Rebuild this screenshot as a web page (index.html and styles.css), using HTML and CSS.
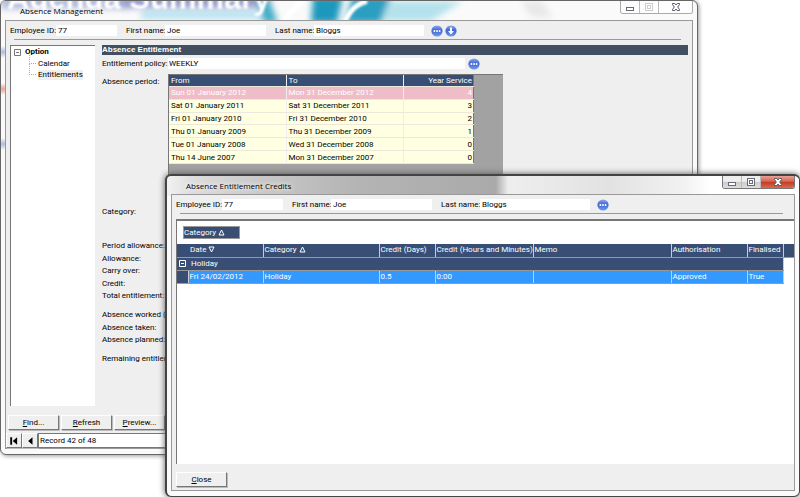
FILE: index.html
```html
<!DOCTYPE html>
<html lang="en">
<head>
<meta charset="utf-8">
<title>Absence Management</title>
<link rel="stylesheet" href="styles.css">
</head>
<body>
<svg class="defs" width="0" height="0" aria-hidden="true">
  <defs>
    <linearGradient id="ball" x1="0" y1="0" x2="0" y2="1">
      <stop offset="0" stop-color="#8fa9ee"/><stop offset=".45" stop-color="#3f66d2"/><stop offset="1" stop-color="#6f9cf0"/>
    </linearGradient>
    <symbol id="more" viewBox="0 0 12 12">
      <circle cx="6" cy="6" r="5.6" fill="url(#ball)"/>
      <circle cx="3.4" cy="6" r="1" fill="#fff"/><circle cx="6" cy="6" r="1" fill="#fff"/><circle cx="8.6" cy="6" r="1" fill="#fff"/>
    </symbol>
    <symbol id="down" viewBox="0 0 12 12">
      <circle cx="6" cy="6" r="5.6" fill="url(#ball)"/>
      <path d="M5 2.5h2v3.500h2L6 9.500 3 6h2z" fill="#fff"/>
    </symbol>
    <symbol id="min" viewBox="0 0 10 10"><rect x="1.500" y="5.500" width="7" height="3" fill="#fff" stroke="#666b78"/></symbol>
    <symbol id="max" viewBox="0 0 10 10"><rect x="1.500" y="1.500" width="7" height="7" fill="#fff" stroke="currentColor"/><rect x="3.500" y="3.500" width="3" height="3" fill="none" stroke="currentColor"/></symbol>
    <symbol id="cross" viewBox="0 0 10 10"><path d="M1.500 1.500h2.300L5 3l1.200-1.500h2.300v1L6.700 5l1.800 2.500v1H6.200L5 7 3.800 8.500H1.500v-1L3.300 5 1.500 2.500z" fill="#fff" stroke="#555a68"/></symbol>
  </defs>
</svg>

<section class="window main-window" aria-label="Absence Management">
  <svg class="backdrop" width="690" height="20" aria-hidden="true">
    <defs>
      <filter id="soft" x="-20%" y="-50%" width="140%" height="200%"><feGaussianBlur stdDeviation="3"/></filter>
      <filter id="glow"><feGaussianBlur stdDeviation="1"/></filter>
    </defs>
    <g filter="url(#soft)">
      <rect x="0" y="-6" width="130" height="14" fill="#b4bddb"/>
      <rect x="120" y="-6" width="150" height="13" fill="#9a9fd0"/>
      <rect x="140" y="10" width="130" height="8" fill="#b4e2ef"/>
      <path d="M255 0h14l8 22h-14z" fill="#45afc9"/>
      <path d="M312-5h30l-6 27h-26z" fill="#1f98bc"/>
      <path d="M352-5h38l-10 27h-36z" fill="#2c9fc2"/>
      <path d="M388 0h74l-32 20h-50z" fill="#b4e2ec"/>
      <path d="M520 0h20l12 16h-22z" fill="#e8e8e8"/>
    </g>
    <text class="banner" x="6" y="8" filter="url(#glow)">Agenda Summary</text>
    <path d="M283 20C291 8 296 4 302 0M344 20C350 8 356 3 366 0" fill="none" stroke="#fff" stroke-width="5" filter="url(#glow)"/>
  </svg>
  <header class="titlebar">
    <h1>Absence Management</h1>
    <div class="caption">
      <button aria-label="Minimise"><svg><use href="#min"/></svg></button>
      <button class="off" aria-label="Maximise"><svg><use href="#max"/></svg></button>
      <button class="close" aria-label="Close window"><svg><use href="#cross"/></svg></button>
    </div>
  </header>
  <div class="client">
    <form class="person">
      <label for="id1" class="l-id">Employee ID:</label><input id="id1" class="w-id" value="77">
      <label for="fn1">First name:</label><input id="fn1" class="w-first" value="Joe">
      <label for="ln1">Last name:</label><input id="ln1" class="w-last" value="Bloggs">
      <button type="button" class="ball" aria-label="Find employee"><svg><use href="#more"/></svg></button>
      <button type="button" class="ball" aria-label="Show details"><svg><use href="#down"/></svg></button>
    </form>
    <div class="body">
      <nav class="tree">
        <div class="root"><svg class="box" viewBox="0 0 7 7"><path d="M.5 .5h6v6h-6zM2 3.500h3" fill="none" stroke="#777"/></svg><b>Option</b></div>
        <ul>
          <li><a href="#calendar">Calendar</a></li>
          <li><a class="current" href="#entitlements">Entitlements</a></li>
        </ul>
      </nav>
      <main>
        <h2>Absence Entitlement</h2>
        <div class="line policy">
          <label for="policy">Entitlement policy:</label><input id="policy" value="WEEKLY">
          <button type="button" class="ball" aria-label="Choose policy"><svg><use href="#more"/></svg></button>
        </div>
        <div class="line period">
          <span>Absence period:</span>
          <div class="sheet">
            <table class="periods">
              <colgroup><col class="from"><col class="to"><col></colgroup>
              <thead><tr><th>From</th><th>To</th><th>Year Service</th></tr></thead>
              <tbody>
                <tr class="picked"><td>Sun 01 January 2012</td><td>Mon 31 December 2012</td><td>4</td></tr>
                <tr><td>Sat 01 January 2011</td><td>Sat 31 December 2011</td><td>3</td></tr>
                <tr><td>Fri 01 January 2010</td><td>Fri 31 December 2010</td><td>2</td></tr>
                <tr><td>Thu 01 January 2009</td><td>Thu 31 December 2009</td><td>1</td></tr>
                <tr><td>Tue 01 January 2008</td><td>Wed 31 December 2008</td><td>0</td></tr>
                <tr><td>Thu 14 June 2007</td><td>Mon 31 December 2007</td><td>0</td></tr>
              </tbody>
            </table>
          </div>
        </div>
        <div class="group category"><span>Category:</span></div>
        <div class="group five"><span>Period allowance:</span><span>Allowance:</span><span>Carry over:</span><span>Credit:</span><span>Total entitlement:</span></div>
        <div class="group three"><span>Absence worked (not taken):</span><span>Absence taken:</span><span>Absence planned:</span></div>
        <div class="group"><span>Remaining entitlement:</span></div>
      </main>
    </div>
    <div class="actions">
      <button class="push"><u>F</u>ind...</button><button class="push"><u>R</u>efresh</button><button class="push"><u>P</u>review...</button>
    </div>
    <div class="records">
      <button class="push step" aria-label="First record"><svg viewBox="0 0 8 8"><path d="M1 1h1.500v6H1zM6.500 1v6L3 4z"/></svg></button>
      <button class="push step" aria-label="Previous record"><svg viewBox="0 0 8 8"><path d="M6 1v6L2.500 4z"/></svg></button>
      <input aria-label="Record" value="Record 42 of 48">
    </div>
  </div>
</section>

<section class="window credits-window" aria-label="Absence Entitlement Credits">
  <header class="titlebar">
    <h1>Absence Entitlement Credits</h1>
    <div class="caption">
      <button aria-label="Minimise"><svg><use href="#min"/></svg></button>
      <button aria-label="Maximise"><svg><use href="#max"/></svg></button>
      <button class="close red" aria-label="Close window"><svg><use href="#cross"/></svg></button>
    </div>
  </header>
  <div class="client">
    <form class="person">
      <label for="id2" class="l-id">Employee ID:</label><input id="id2" class="w-id" value="77">
      <label for="fn2">First name:</label><input id="fn2" class="w-first" value="Joe">
      <label for="ln2">Last name:</label><input id="ln2" class="w-last" value="Bloggs">
      <button type="button" class="ball" aria-label="Find employee"><svg><use href="#more"/></svg></button>
    </form>
    <div class="panel">
      <button class="grouping">Category <svg viewBox="0 0 7 7"><path d="M3.500 1l2.500 5H1z"/></svg></button>
      <table class="credits">
        <colgroup><col class="c-gutter"><col class="c-date"><col class="c-cat"><col class="c-days"><col class="c-hours"><col><col class="c-auth"><col class="c-final"><col class="c-tail"></colgroup>
        <thead><tr>
          <th colspan="2" class="date">Date <svg viewBox="0 0 7 7"><path d="M3.500 6L1 1h5z"/></svg></th>
          <th>Category <svg viewBox="0 0 7 7"><path d="M3.500 1l2.500 5H1z"/></svg></th>
          <th>Credit (Days)</th><th>Credit (Hours and Minutes)</th><th>Memo</th><th>Authorisation</th><th>Finalised</th><th class="tail"></th>
        </tr></thead>
        <tbody>
          <tr class="holiday"><td colspan="8"><svg class="box" viewBox="0 0 7 7"><path d="M.5 .5h6v6h-6zM2 3.500h3" fill="none" stroke="#fff"/></svg>Holiday</td><td class="none"></td></tr>
          <tr class="entry"><td class="gutter"></td><td>Fri 24/02/2012</td><td>Holiday</td><td>0.5</td><td>0:00</td><td></td><td>Approved</td><td>True</td><td class="none"></td></tr>
        </tbody>
      </table>
    </div>
    <div class="actions"><button class="push"><u>C</u>lose</button></div>
  </div>
</section>
</body>
</html>
```
FILE: styles.css
```css
* { box-sizing: border-box; }
html, body { height: 100%; }
body {
  margin: 0;
  position: relative;
  overflow: hidden;
  background: #fff;
  color: #000;
  font: 8px/12px "Roboto", sans-serif;
}
button, input { font: inherit; color: inherit; margin: 0; padding: 0; border: 0; border-radius: 0; }
input { background: #fff; height: 11px; padding: 0 2px; min-width: 0; }
h1, h2, ul { margin: 0; padding: 0; font-size: inherit; }
a { color: inherit; text-decoration: none; }
span, label, th, td, button { white-space: nowrap; }
.defs { position: absolute; }

/* Windows */
.window {
  position: absolute;
  display: flex;
  flex-direction: column;
  border: 1px solid #666;
  border-radius: 6px;
  padding: 0 4px 5px;
  background: #fafafa;
}
.main-window {
  left: 0; top: 0; right: 102px; height: 455px;
  box-shadow: 1px 1px 4px #999;
  background:
    radial-gradient(circle at 2px 51px, #a9b8e6, transparent 6px),
    radial-gradient(circle at 2px 88px, #f09a90, transparent 6px),
    radial-gradient(circle at 2px 143px, #a9b8e6, transparent 6px),
    #fafafa;
}
.credits-window {
  left: 165px; top: 174px; right: 0; bottom: 0;
  border-width: 2px 1px 1px 2px;
  border-color: #444;
  box-shadow: 0 0 6px #555;
  background: linear-gradient(90deg, #f2f2f2 0, #ddd 4%, #c8c8c8 15%, #b4b4b4 30%, #aaa 52%, #eee 54%, #e2e2e2 70%, #f2f2f2 82%, #fff 86%) top / 100% 20px no-repeat, #fafafa;
}
.backdrop { position: absolute; left: 0; top: 0; max-width: 100%; }
.banner { font: bold 31px "Liberation Sans", sans-serif; fill: #fff; }
.titlebar { position: relative; display: flex; justify-content: space-between; height: 19px; flex: none; }
.titlebar h1 { font: 8px/19px "Open Sans", "Noto Sans", sans-serif; padding-left: 15px; text-shadow: 0 0 4px #fff, 0 0 6px #fff; }
.credits-window .titlebar { height: 18px; }
.caption { display: flex; height: 13px; border: 1px solid #aaa; border-top: 0; border-radius: 0 0 3px 3px; overflow: hidden; }
.caption button { width: 19px; display: grid; place-items: center; background: #fdfdfd; border-right: 1px solid #bbb; }
.caption button.close { width: 33px; border-right: 0; }
.caption svg { width: 10px; height: 10px; color: #666b78; }
.caption .off svg { color: #ccc; }
.credits-window .caption { border-color: #777; }
.credits-window .caption button { background: linear-gradient(#eee 45%, #ccc 50%, #ddd); }
.credits-window .caption button.red { background: linear-gradient(#e9a296 0, #d5644f 45%, #c43a22 50%, #d86a50); }
.client {
  position: relative;
  flex: 1;
  display: flex;
  flex-direction: column;
  min-height: 0;
  border: 1px solid #999;
  background: #efefef;
}

/* Employee line */
.person {
  display: flex;
  align-items: center;
  height: 19px;
  padding-left: 4px;
  margin-right: 11px;
  flex: none;
  background: linear-gradient(#999, #999) 8px 100% / 100% 1px no-repeat;
}
.person label { width: 39px; flex: none; }
.person .l-id { width: 46px; }
.person .w-id { width: 61px; margin-right: 9px; }
.person .w-first { width: 101px; margin-right: 9px; }
.person .w-last { width: 110px; margin-right: 7px; }
.ball { width: 12px; height: 12px; background: none; margin-right: 2px; flex: none; }
.ball svg { display: block; width: 12px; height: 12px; }

/* Main window */
.body { flex: 1; display: flex; gap: 7px; min-height: 0; padding: 5px 4px 0; }
.tree { width: 85px; flex: none; background: #fff; border: 1px solid #777; border-right: 0; border-bottom: 0; }
.root { display: flex; align-items: center; gap: 4px; padding: 0 3px; }
.box { width: 7px; height: 7px; }
.tree ul { list-style: none; line-height: 10px; margin-left: 18px; }
.tree li { display: flex; align-items: center; }
.tree li::before { content: ""; width: 6px; height: 10px; margin: -5px 2px 5px 0; border: dotted #aaa; border-width: 0 0 1px 1px; }
.tree .current { background: #eee; }
main { flex: 1; min-width: 0; }
h2 { height: 10px; background: #414f60; color: #fff; font: bold 8px/10px "Liberation Sans", sans-serif; }
.line { display: flex; }
.line > label, .line > span { width: 66px; flex: none; }
.policy { padding-top: 3px; }
.policy input { width: 297px; margin-right: 3px; padding: 0 1px; }
.period { padding-top: 4px; }
.period > span { padding-top: 2px; }
.sheet { width: 335px; height: 130px; background: #a2a2a2; border: 1px solid #777; border-right: 0; }
.periods { width: 305px; height: 89px; table-layout: fixed; border-collapse: collapse; border-right: 1px solid #777; background: #ffffe1; }
.from { width: 117px; }
.to { width: 117px; }
.periods th, .periods td { padding: 0 2px; line-height: 11px; text-align: left; font-weight: normal; border-left: 1px solid #eee; border-bottom: 1px solid #eee8dc; }
.periods th { background: #384e75; color: #fff; }
.periods th:first-child, .periods td:first-child { border-left: 0; }
.periods th:last-child, .periods td:last-child { text-align: right; padding-right: 1px; }
.periods .picked { background: #efbdc8; color: #fff; }
.group { display: grid; margin-bottom: 6px; }
.category { margin: 2px 0 22px; }
.five { height: 63px; }
.three { height: 38px; }

/* Push buttons and record bar */
.actions { display: flex; gap: 2px; padding: 9px 2px 3px; }
.push { width: 51px; height: 15px; line-height: 13px; background: #efefef; border: 1px solid; border-color: #fff #777 #777 #fff; box-shadow: 1px 1px 0 #bbb; }
.records { display: flex; }
.records .step { width: 16px; display: grid; place-items: center; }
.step svg { width: 10px; height: 10px; }
.records input { flex: 1; height: 15px; padding: 0 1px; border: 1px solid #777; }

/* Credits window */
.panel { flex: 1; margin: 5px 0 0 4px; border: 1px solid #777; border-width: 2px 0 0 1px; background: #fff; min-height: 0; }
.grouping { display: block; width: 57px; height: 13px; line-height: 11px; margin: 5px 0 5px 6px; background: #384e75; color: #fff; text-align: left; border: 1px solid #999; }
.grouping svg, .credits th svg { width: 7px; height: 7px; fill: none; stroke: #fff; vertical-align: -1px; }
.credits { width: 100%; table-layout: fixed; border-collapse: collapse; color: #fff; }
.c-gutter { width: 11px; }
.c-date { width: 75px; }
.c-cat { width: 116px; }
.c-days { width: 56px; }
.c-hours { width: 98px; }
.c-auth { width: 76px; }
.c-final { width: 36px; }
.c-tail { width: 11px; }
.credits th, .credits td { height: 13px; padding: 0 1px; text-align: left; font-weight: normal; border-right: 1px solid #ccc; border-bottom: 1px solid #999; line-height: 12px; }
.credits th, .credits .holiday td, .credits .gutter { background: #384e75; }
.credits .date { padding-left: 13px; }
.credits .tail { border-right: 0; }
.holiday .box { margin: 0 5px 0 1px; vertical-align: -1px; }
.entry td { background: #3399ff; }
.credits tr .none { background: none; border: 0; }
.credits-window .actions { padding: 8px 4px 3px; }
```
